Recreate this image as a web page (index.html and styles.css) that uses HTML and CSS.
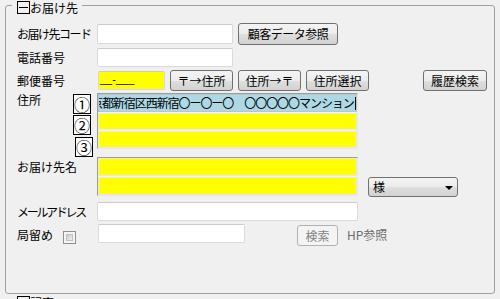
FILE: index.html
```html
<!DOCTYPE html>
<html lang="ja">
<head>
<meta charset="utf-8">
<link rel="stylesheet" href="styles.css">
</head>
<body>
<fieldset class="group">
  <legend class="group-title"><span class="toggle minus"></span><span class="title-text">お届け先</span></legend>

  <div class="row r1">
    <span class="label w80 tight">お届け先コード</span>
    <span class="field w136"></span>
    <span class="btn b-cust">顧客データ参照</span>
  </div>

  <div class="row r2">
    <span class="label w80">電話番号</span>
    <span class="field w136 h19"></span>
  </div>

  <div class="row r3">
    <span class="label w81">郵便番号</span>
    <span class="field yellow zip">__-___</span>
    <span class="btn b-small gap5">〒→住所</span>
    <span class="btn b-small gap5">住所→〒</span>
    <span class="btn b-small gap5">住所選択</span>
    <span class="btn b-small b-hist">履歴検索</span>
  </div>

  <div class="row r4">
    <span class="label w56 top">住所</span>
    <div class="nums">
      <span class="num">①</span>
      <span class="num n2">②</span>
      <span class="num n3">③</span>
    </div>
    <div class="multi addr">
      <div class="line blue first"><span class="scroll">東京都新宿区西新宿〇ー〇ー〇　〇〇〇〇〇マンション</span><span class="caret"></span></div>
      <div class="line"></div>
      <div class="line"></div>
    </div>
  </div>

  <div class="row r5">
    <span class="label w80 name-label">お届け先名</span>
    <div class="multi name">
      <div class="line"></div>
      <div class="line"></div>
    </div>
    <div class="select"><span>様</span><span class="arrow"></span></div>
  </div>

  <div class="row r6">
    <span class="label w80 tighter">メールアドレス</span>
    <span class="field w261 h19"></span>
  </div>

  <div class="row r7">
    <span class="label w46">局留め</span>
    <span class="check"></span>
    <span class="field w147 h19 post"></span>
    <span class="btn disabled b-search">検索</span>
    <span class="hp">HP参照</span>
  </div>
</fieldset>

<fieldset class="group group2">
  <legend class="group-title"><span class="toggle"></span><span class="title-text">記事</span></legend>
</fieldset>
</body>
</html>
```

FILE: styles.css
```css
* { box-sizing: border-box; }
html, body { margin: 0; padding: 0; }
body {
  width: 500px;
  height: 299px;
  overflow: hidden;
  background: #f0f0f0;
  font-family: "Noto Sans CJK JP", "Noto Sans", sans-serif;
  font-size: 12px;
  color: #000;
}

.group {
  margin: 0 5px;
  padding: 12px 0 0 11px;
  border: 1px solid #a0a0a0;
  border-radius: 3px;
  height: 294px;
  min-width: 0;
}
.group-title {
  margin-left: -5px;
  padding: 0 4px 0 5px;
  height: 11px;
  display: flex;
  align-items: flex-start;
  line-height: 13px;
}
.toggle {
  width: 13px;
  height: 13px;
  margin-top: 1px;
  border: 1px solid #000;
  display: flex;
  align-items: center;
  justify-content: center;
  background: #f0f0f0;
}
.toggle.minus::before {
  content: "";
  width: 9px;
  height: 1px;
  background: #000;
}
.title-text { margin-top: 1px; line-height: 13px; }

.group2 {
  margin-top: 1px;
  height: 4px;
}

.row { display: flex; align-items: center; }
.r1 { height: 22px; }
.r2 { height: 19px; margin-top: 3px; }
.r3 { height: 21px; margin-top: 3px; }
.r4 { height: 64px; margin-top: 2px; align-items: flex-start; }
.r5 { height: 40px; align-items: flex-start; }
.r6 { height: 19px; margin-top: 5px; }
.r7 { height: 22px; margin-top: 3px; align-items: flex-start; }

.label { flex: none; white-space: nowrap; line-height: 16px; }
.tight { letter-spacing: -1.5px; }
.tighter { letter-spacing: -2.3px; }
.w80 { width: 80px; }
.w81 { width: 81px; }
.w56 { width: 56px; }
.w46 { width: 46px; }
.label.top { line-height: 14px; margin-top: 0; }
.name-label { line-height: 20px; }
.r7 .label { line-height: 22px; }

.field {
  flex: none;
  height: 20px;
  background: #fff;
  border: 1px solid #dadada;
  border-top-color: #cbcbcb;
  border-radius: 2px;
}
.h19 { height: 19px; }
.w136 { width: 136px; }
.w261 { width: 261px; }
.w147 { width: 147px; }
.yellow { background: #ffff00; }
.zip {
  width: 67px;
  height: 19px;
  font-family: "Liberation Sans", sans-serif;
  font-size: 11px;
  line-height: 15px;
  padding-left: 1px;
}

.btn {
  flex: none;
  height: 21px;
  border: 1px solid #707070;
  border-radius: 3px;
  background: linear-gradient(#f4f4f4 0%, #ececec 50%, #dfdfdf 51%, #d2d2d2 100%);
  display: flex;
  align-items: center;
  justify-content: center;
  white-space: nowrap;
  line-height: 14px;
}
.b-cust { width: 100px; height: 22px; margin-left: 5px; letter-spacing: -0.5px; }
.b-small { width: 63px; }
.gap5 { margin-left: 5px; }
.b-hist { margin-left: 54px; width: 64px; }
.btn.disabled {
  border-color: #adb2b5;
  background: #f4f4f4;
  color: #838383;
}
.b-search { width: 41px; margin-top: 1px; margin-left: 52px; }
.hp { margin-left: 9px; color: #6d6d6d; line-height: 22px; }

.nums { display: flex; flex-direction: column; margin-top: 1px; flex: none; width: 20px; }
.num {
  width: 18px;
  height: 20px;
  border: 1px solid #000;
  background: #fff;
  display: flex;
  align-items: center;
  justify-content: center;
  font-size: 16px;
  line-height: 16px;
}
.num.n2 { margin-top: 1px; }
.num.n3 { margin-top: 2px; margin-left: 2px; }

.multi {
  flex: none;
  width: 261px;
  margin-left: 4px;
  border: 1px solid;
  border-color: #9c9c9c #e6e6e6 #e6e6e6 #9c9c9c;
  display: flex;
  flex-direction: column;
  gap: 1px;
  background: #f4f4f4;
}
.r5 .multi { margin-left: 0; }
.line {
  height: 17px;
  border: 1px solid #e9e9e9;
  background: #ffff00;
  overflow: hidden;
  display: flex;
  align-items: center;
}
.line.first { height: 18px; }
.name .line { height: 18px; }
.line.blue { background: #add8e6; border-color: #b9c7cc; }
.scroll {
  white-space: nowrap;
  margin-left: -19px;
  letter-spacing: -1.05px;
  line-height: 14px;
  flex: none;
}
.caret { flex: none; width: 1px; height: 13px; background: #000; margin-left: 1px; }

.select {
  flex: none;
  width: 90px;
  height: 20px;
  margin-left: 10px;
  align-self: flex-end;
  border: 1px solid #707070;
  border-radius: 3px;
  background: linear-gradient(#f4f4f4 0%, #ececec 50%, #dfdfdf 51%, #d2d2d2 100%);
  display: flex;
  align-items: center;
  justify-content: space-between;
  padding: 0 4px 0 4px;
  line-height: 14px;
}
.arrow {
  width: 0;
  height: 0;
  border-left: 4px solid transparent;
  border-right: 4px solid transparent;
  border-top: 4px solid #000;
  margin-top: 1px;
}

.check {
  flex: none;
  width: 13px;
  height: 13px;
  margin-top: 7px;
  border: 1px solid #8e8f8f;
  background: #f4f4f4;
  padding: 2px;
  display: flex;
}
.check::before {
  content: "";
  flex: 1;
  background: linear-gradient(135deg, #cbcbcb, #eeeeee);
  border: 1px solid #c0c0c0;
}
.post { margin-left: 22px; }
```
